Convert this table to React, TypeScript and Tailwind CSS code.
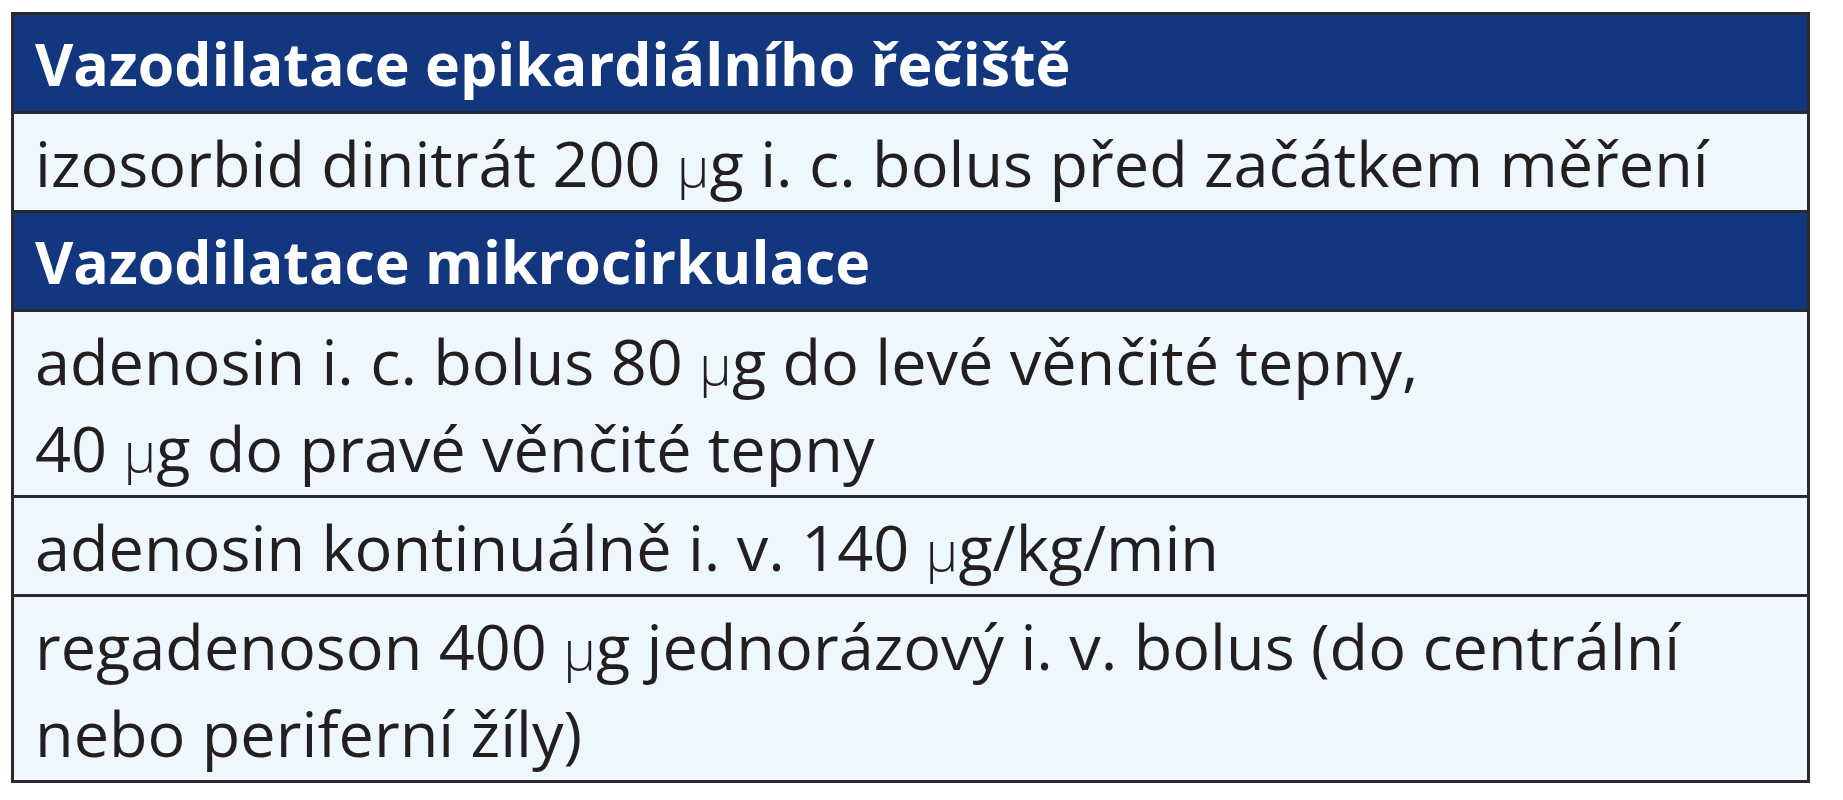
import React from 'react';

const Mu = () => <span className="text-[55px] font-light leading-none">μ</span>;

function Header({ children }: { children: React.ReactNode }) {
  return (
    <div className="bg-[#13377f] border-b-[3px] border-[#2a2a2e] pl-[21px] pr-4 pt-[5px] pb-[4px] text-[59px] font-bold leading-[87px] text-white">
      {children}
    </div>
  );
}

function Cell({ children, last }: { children: React.ReactNode; last?: boolean }) {
  return (
    <div
      className={`bg-[#eef6fe] pl-[21px] pr-4 pt-[5px] pb-[4px] text-[63px] leading-[87px] text-[#231f20] ${
        last ? '' : 'border-b-[3px] border-[#2a2a2e]'
      }`}
    >
      {children}
    </div>
  );
}

export default function App() {
  return (
    <div className="min-h-screen bg-white pt-[12px] pl-[11px]" style={{ fontFamily: '"Open Sans", "Noto Sans", sans-serif' }}>
      <div className="w-[1799px] border-[3px] border-[#2a2a2e] whitespace-nowrap">
        <Header>Vazodilatace epikardiálního řečiště</Header>
        <Cell>
          izosorbid dinitrát 200 <Mu />g i. c. bolus před začátkem měření
        </Cell>
        <Header>Vazodilatace mikrocirkulace</Header>
        <Cell>
          adenosin i. c. bolus 80 <Mu />g do levé věnčité tepny,
          <br />
          40 <Mu />g do pravé věnčité tepny
        </Cell>
        <Cell>
          adenosin kontinuálně i. v. 140 <Mu />g/kg/min
        </Cell>
        <Cell last>
          regadenoson 400 <Mu />g jednorázový i. v. bolus (do centrální
          <br />
          nebo periferní žíly)
        </Cell>
      </div>
    </div>
  );
}
